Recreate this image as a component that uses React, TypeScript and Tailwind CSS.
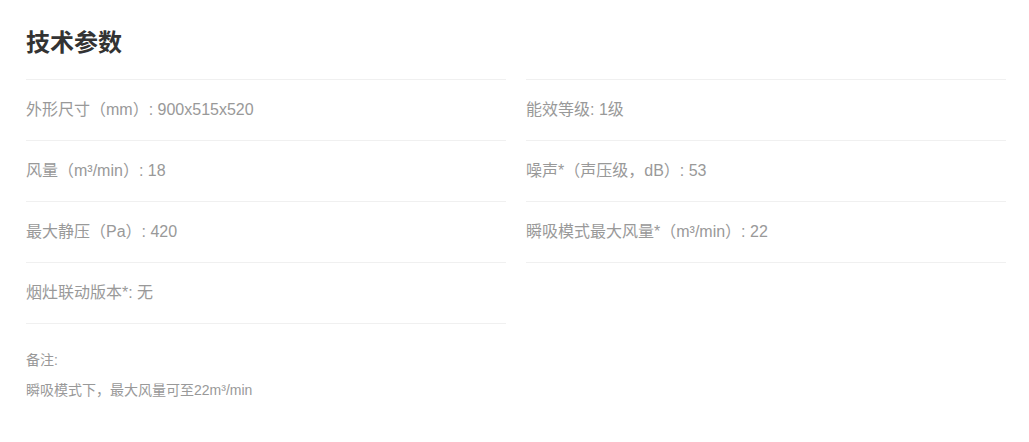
const left = [
  '外形尺寸（mm）: 900x515x520',
  '风量（m³/min）: 18',
  '最大静压（Pa）: 420',
  '烟灶联动版本*: 无',
];

const right = [
  '能效等级: 1级',
  '噪声*（声压级，dB）: 53',
  '瞬吸模式最大风量*（m³/min）: 22',
];

function SpecColumn({ items }: { items: string[] }) {
  return (
    <ul className="flex-1 border-t border-[#f0f0f0]">
      {items.map((item) => (
        <li
          key={item}
          className="h-[61px] flex items-center border-b border-[#f0f0f0] text-[16px] text-[#999]"
        >
          {item}
        </li>
      ))}
    </ul>
  );
}

export default function App() {
  return (
    <div
      className="w-[1029px] h-[442px] bg-white px-[26px] pt-[26px]"
      style={{ fontFamily: '"Liberation Sans", Arial, "Noto Sans CJK SC", sans-serif' }}
    >
      <h2 className="text-[24px] leading-[34px] font-bold text-[#333]">技术参数</h2>
      <div className="mt-[19px] w-[980px] flex gap-5">
        <SpecColumn items={left} />
        <SpecColumn items={right} />
      </div>
      <div className="mt-[21px] text-[14px] leading-[30px] text-[#999]">
        <p>备注:</p>
        <p>瞬吸模式下，最大风量可至22m³/min</p>
      </div>
    </div>
  );
}
